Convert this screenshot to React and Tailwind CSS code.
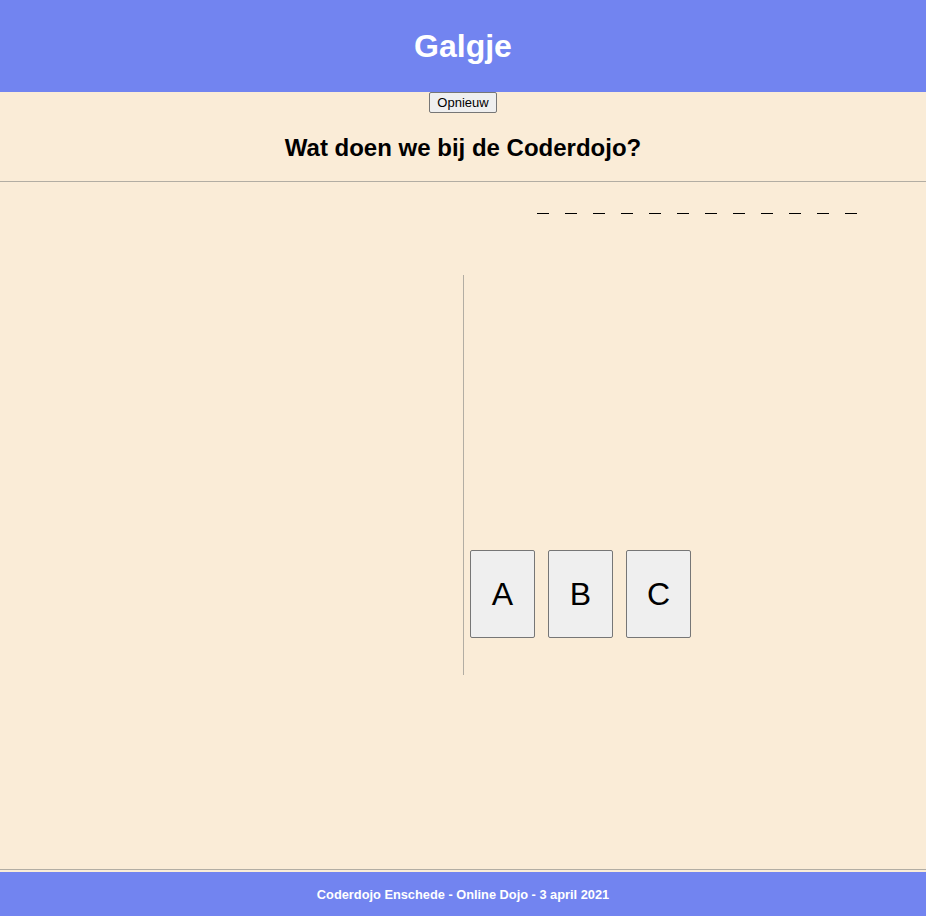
const WORD_LENGTH = 12;
const LETTERS = ['A', 'B', 'C'];

const App = () => (
  <div className="flex min-h-screen flex-col bg-[#faecd7] font-['Liberation_Sans',Arial,sans-serif] text-black">
    <header className="flex h-[92px] items-center justify-center bg-[#7284f0]">
      <h1 className="text-[32px] font-bold leading-none text-white">Galgje</h1>
    </header>
    <div className="flex justify-center">
      <button className="h-[21px] rounded-[2px] border border-[#767676] bg-[#efefef] px-[7.5px] text-[13px] leading-none">
        Opnieuw
      </button>
    </div>
    <h2 className="mt-[21px] text-center text-[24px] font-bold leading-[28px]">Wat doen we bij de Coderdojo?</h2>
    <hr className="mt-[19px] border-t border-[#b2ada3]" />
    <div className="flex-1">
      <div className="flex justify-end gap-[16px] pr-[69px] pt-[31px]">
        {Array.from({ length: WORD_LENGTH }).map((_, i) => (
          <span key={i} className="block h-px w-[12px] bg-black" />
        ))}
      </div>
      <div className="mt-[61px] flex">
        <div className="h-[400px] w-[464px] border-r border-[#b2ada3]" />
        <div className="flex items-start gap-[13px] pl-[6px] pt-[275px]">
          {LETTERS.map((letter) => (
            <button
              key={letter}
              className="flex h-[88px] w-[65px] items-center justify-center rounded-[2px] border border-[#767676] bg-[#efefef] text-[32px]"
            >
              {letter}
            </button>
          ))}
        </div>
      </div>
    </div>
    <hr className="border-t border-[#b2ada3]" />
    <footer className="mt-[2px] flex h-[44px] items-center justify-center bg-[#7284f0] pt-[2px]">
      <p className="text-[12.8px] font-bold text-white">Coderdojo Enschede - Online Dojo - 3 april 2021</p>
    </footer>
  </div>
);

export default App;
